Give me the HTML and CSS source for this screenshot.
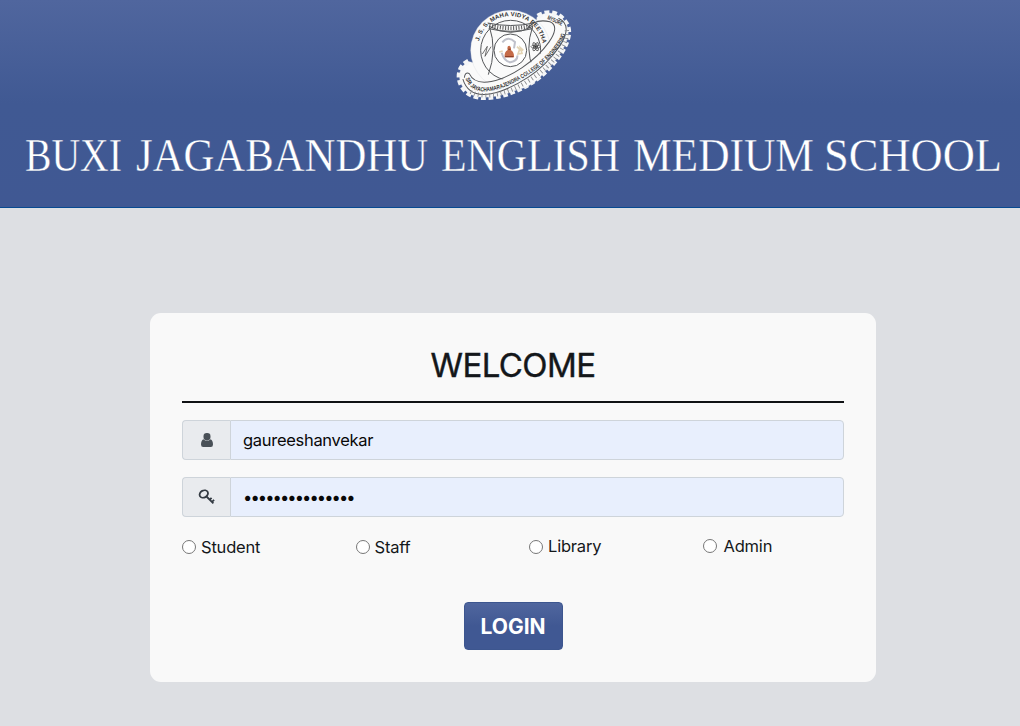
FILE: index.html
```html
<!DOCTYPE html>
<html lang="en">
<head>
<meta charset="utf-8">
<title>Login</title>
<link rel="stylesheet" href="styles.css">
</head>
<body>
<header class="banner">
  <svg class="crest" viewBox="0 0 450 330" aria-hidden="true">
    <defs>
      <path id="globe-arc" d="M117 124A97 97 0 0 1 307 128"/>
      <path id="band-arc" d="M-160 -20C-182 54 -65 75 20 73S205 36 168 -18"/>
    </defs>
    <g transform="translate(222 165) rotate(-33)">
      <path class="gear-base" d="M-125 -58C-160 -62 -187 -30 -180 10C-170 64 -75 97 0 97S180 60 182 8C184 -37 155 -58 120 -58L70 0L-70 0Z"/>
      <path class="gear-teeth" d="M-125 -58C-160 -62 -187 -30 -180 10C-170 64 -75 97 0 97S180 60 182 8C184 -37 155 -58 120 -58"/>
    </g>
    <circle class="globe" cx="212" cy="151" r="120"/>
    <circle class="line" cx="212" cy="151" r="90"/>
    <path class="line" d="M148 79Q212 115 278 79Q254 150 280 205M148 79Q172 150 145 224"/>
    <path class="pillars" d="M148 77Q212 92 278 77"/>
    <path class="line" d="M143 69Q212 84 281 69M146 86Q212 102 278 86"/>
    <circle class="line inner" cx="211" cy="151" r="49"/>
    <path class="zig" d="M127 162L142 139L135 169L153 140"/>
    <g class="atom" transform="translate(287 140)">
      <ellipse rx="14" ry="5"/><ellipse rx="14" ry="5" transform="rotate(60)"/><ellipse rx="14" ry="5" transform="rotate(120)"/><circle r="3"/>
    </g>
    <path class="halo" d="M187 127Q205 106 225 126L222 145M185 158Q192 183 211 187Q234 182 232 166"/>
    <path class="wings" d="M178 156L188 153M231 140L239 148L234 162L246 160L241 143L250 151"/>
    <path class="robe" d="M194 172Q192 156 203 150Q200 137 208 137Q215 140 212 150Q223 156 222 172Z"/>
    <path class="robe-dark" d="M195 170H220M205 148H212"/>
    <g transform="translate(222 165) rotate(-33)">
      <path class="band" d="M-158 -26C-172 48 -70 64 0 63S197 30 160 -22"/>
      <path class="line" d="M-143 -27C-151 27 -70 46 0 45S172 15 145 -25M-168 -23C-192 62 -75 79 0 79S212 42 172 -20M-143 -27Q-151 -38 -162 -24M145 -25Q110 -60 75 -43"/>
      <path class="gear-marks" d="M-169 22C-145 67 -75 89 0 89S155 67 175 20"/>
    </g>
    <text class="crest-text"><textPath href="#globe-arc" textLength="268">J. S. S. MAHA VIDYA PEETHA</textPath></text>
    <g transform="translate(222 165) rotate(-33)">
      <text class="band-text"><textPath href="#band-arc" textLength="385" lengthAdjust="spacingAndGlyphs">SRI JAYACHAMARAJENDRA COLLEGE OF ENGINEERING</textPath></text>
    </g>
    <text class="crest-text" x="321" y="57" transform="rotate(25 321 57)" textLength="48" lengthAdjust="spacingAndGlyphs">MYSORE</text>
  </svg>
  <h1 class="school">
    <svg class="school-name" viewBox="0 0 1020 60">
      <text y="45"><tspan x="25" textLength="97" lengthAdjust="spacingAndGlyphs">BUXI</tspan> <tspan x="136" textLength="292" lengthAdjust="spacingAndGlyphs">JAGABANDHU</tspan> <tspan x="441" textLength="179" lengthAdjust="spacingAndGlyphs">ENGLISH</tspan> <tspan x="633" textLength="181" lengthAdjust="spacingAndGlyphs">MEDIUM</tspan> <tspan x="824" textLength="178" lengthAdjust="spacingAndGlyphs">SCHOOL</tspan></text>
    </svg>
  </h1>
</header>
<main class="page">
  <form class="card">
    <h2 class="welcome">WELCOME</h2>
    <label class="field">
      <span class="addon"><svg class="icon" viewBox="0 0 16 16"><rect class="user-fill" x="4.5" y="1" width="7" height="7.4" rx="3.3"/><path class="user-fill" d="M4.4 7.2Q8 10.3 11.6 7.2Q14 8.4 14 12.5Q14 15 11.8 15H4.2Q2 15 2 12.5Q2 8.4 4.4 7.2Z"/></svg></span>
      <input class="control" type="text" value="gaureeshanvekar">
    </label>
    <label class="field">
      <span class="addon"><svg class="icon key" viewBox="0 0 18 16"><ellipse cx="5.8" cy="5" rx="4.4" ry="3.5" transform="rotate(-28 5.8 5)"/><path d="M8.5 7.5L15.4 14.4M11.7 10.7L13.6 8.8M14 12.8L16.1 10.8"/></svg></span>
      <input class="control password" type="password" value="abcdefghijklmno">
    </label>
    <div class="roles">
      <label class="role"><input type="radio" name="role"><span>Student</span></label>
      <label class="role"><input type="radio" name="role"><span>Staff</span></label>
      <label class="role library"><input type="radio" name="role"><span>Library</span></label>
      <label class="role admin"><input type="radio" name="role"><span>Admin</span></label>
    </div>
    <button class="login" type="button">LOGIN</button>
  </form>
</main>
</body>
</html>
```
FILE: styles.css
```css
* { box-sizing: border-box; }
body { margin: 0; height: 726px; overflow: hidden; background: #dddfe3; color: #14171a; font-family: Inter, "Liberation Sans", sans-serif; }
.banner { height: 208px; background: linear-gradient(#50669e, #405993 50%, #405893); border-bottom: 1px solid #074a91; }
.crest { display: block; width: 150px; height: 110px; margin-left: 440px; }
.school { margin: 16px 0 0; }
.school-name { display: block; width: 100%; height: 60px; fill: #fff; stroke: #405893; stroke-width: .35px; font: 400 46px "Liberation Serif", serif; }
.gear-base, .globe { fill: #fafafa; stroke: #d5d8df; stroke-width: 1; }
.gear-teeth { fill: none; stroke: #f5f6f7; stroke-width: 17; stroke-dasharray: 14 8; }
.gear-marks { fill: none; stroke: #85878a; stroke-width: 13; stroke-dasharray: 2.5 9; }
.line { fill: none; stroke: #55575a; stroke-width: 3; }
.inner { fill: #fff; }
.pillars { fill: none; stroke: #555; stroke-width: 12; stroke-dasharray: 3 5; }
.zig { fill: none; stroke: #555; stroke-width: 2.5; }
.atom { fill: none; stroke: #444; stroke-width: 2.2; }
.atom circle { fill: #333; }
.halo { fill: none; stroke: #bfc1cb; stroke-width: 6; }
.wings { fill: none; stroke: #e4d5b5; stroke-width: 5; }
.robe { fill: #c56b48; }
.robe-dark { stroke: #8e4028; stroke-width: 4; }
.band { fill: none; stroke: #fafafa; stroke-width: 30; }
.crest-text { fill: #333; font: 700 18px "Liberation Sans", sans-serif; }
.band-text { fill: #333; font: 700 18px "Liberation Sans", sans-serif; }
.page { display: flex; justify-content: center; padding: 105px 0 0 6px; }
.card { width: 726px; height: 369px; padding: 32px; border-radius: 11px; background: #f9f9f9; }
.welcome { height: 58px; margin: 0 0 17px; border-bottom: 2px solid #101214; font-size: 33px; font-weight: 400; line-height: 40px; text-align: center; letter-spacing: -.6px; -webkit-text-stroke: .4px; }
.field { display: flex; height: 40px; margin-bottom: 17px; }
.addon { display: flex; align-items: center; justify-content: center; width: 48px; border: 1px solid #ced4da; border-right: 0; border-radius: 4px 0 0 4px; background: #e9ebee; }
.icon { width: 16px; height: 16px; }
.user-fill { fill: #495057; }
.key { width: 18px; fill: none; stroke: #343b43; stroke-width: 1.8; }
.control { flex: 1; min-width: 0; padding: 0 12px; border: 1px solid #ced4da; border-radius: 0 4px 4px 0; outline: 0; background: #e8effd; color: #080808; font: 16.5px Inter, sans-serif; letter-spacing: -.3px; }
.password { letter-spacing: -1.9px; }
.roles { display: grid; grid-template-columns: repeat(4, 173.5px); height: 28px; margin-top: -1px; }
.role { display: flex; align-items: center; gap: 5px; font-size: 16.5px; letter-spacing: -.2px; }
.role input { appearance: none; width: 14px; height: 14px; margin: 0; border: 1px solid #777; border-radius: 50%; background: #fff; }
.library span { margin-top: -2px; }
.admin { gap: 7px; margin-top: -2px; }
.login { display: block; width: 99px; height: 48px; margin: 41px auto 0; padding: 0; border: 1px solid #3d568f; border-radius: 4px; background: linear-gradient(#50669e, #405893 50%); color: #fff; font: 700 21px Inter, sans-serif; }
```
